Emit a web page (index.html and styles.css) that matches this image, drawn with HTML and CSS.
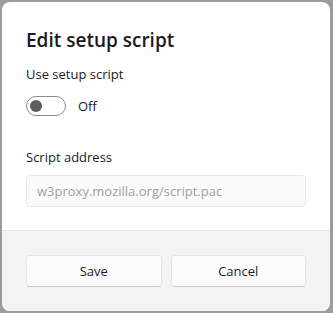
FILE: index.html
```html
<!DOCTYPE html>
<html lang="en">
<head>
    <meta charset="UTF-8">
    <title>Edit setup script</title>
    <link rel="stylesheet" href="styles.css">
</head>
<body>

    <div class="dialog">
        <div class="dialog-body">
            <h1 class="dialog-title">Edit setup script</h1>

            <div class="field-label">Use setup script</div>
            <div class="toggle-row">
                <span class="toggle"><span class="toggle-knob"></span></span>
                <span class="toggle-text">Off</span>
            </div>

            <div class="field-label address-label">Script address</div>
            <input class="address-input" type="text" placeholder="w3proxy.mozilla.org/script.pac">
        </div>

        <div class="dialog-footer">
            <button class="btn">Save</button>
            <button class="btn">Cancel</button>
        </div>
    </div>

</body>
</html>
```

FILE: styles.css
```css
body {
    font-family: 'Open Sans', 'Noto Sans', sans-serif;
    background-color: #9c9c9c;
    margin: 0;
    padding: 2px 3px 2px 2px;
    height: 313px;
    box-sizing: border-box;
    color: #1b1b1b;
}

.dialog {
    background-color: #fff;
    border-radius: 8px;
    height: 100%;
    display: flex;
    flex-direction: column;
    overflow: hidden;
}

.dialog-body {
    flex: 1;
    padding: 24px 24px 0 24px;
}

.dialog-title {
    font-size: 19px;
    font-weight: 600;
    margin: 0 0 10px 0;
    line-height: 28px;
}

.field-label {
    font-size: 13px;
    line-height: 20px;
}

.toggle-row {
    display: flex;
    align-items: center;
    gap: 12px;
    margin-top: 12px;
    font-size: 13px;
}

.toggle {
    width: 40px;
    height: 20px;
    box-sizing: border-box;
    border: 1px solid #8a8a8a;
    border-radius: 10px;
    display: flex;
    align-items: center;
    padding-left: 3px;
}

.toggle-knob {
    width: 12px;
    height: 12px;
    border-radius: 50%;
    background-color: #5d5d5d;
}

.address-label {
    margin-top: 31px;
}

.address-input {
    display: block;
    width: 100%;
    height: 32px;
    margin-top: 8px;
    box-sizing: border-box;
    padding: 0 10px;
    font-family: inherit;
    font-size: 13px;
    background-color: #fafafa;
    border: 1px solid #e8e8e8;
    border-radius: 4px;
}

.address-input::placeholder {
    color: #a0a0a0;
}

.dialog-footer {
    background-color: #f3f3f3;
    border-top: 1px solid #e5e5e5;
    padding: 24px;
    display: grid;
    grid-template-columns: 1fr 1fr;
    gap: 9px;
}

.btn {
    height: 32px;
    font-family: inherit;
    font-size: 13px;
    color: #1b1b1b;
    background-color: #fbfbfb;
    border: 1px solid #e5e5e5;
    border-bottom-color: #cccccc;
    border-radius: 4px;
}
```
